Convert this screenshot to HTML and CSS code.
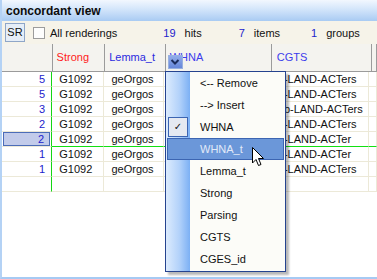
FILE: index.html
```html
<!DOCTYPE html>
<html lang="en">
<head>
  <meta charset="UTF-8">
  <title>concordant view</title>
  <link rel="stylesheet" href="styles.css">
</head>
<body>
  <div class="frame">
    <div class="titlebar">concordant view</div>

    <div class="toolbar">
      <div class="sr-btn">SR</div>
      <div class="check"></div>
      <span class="label first">All renderings</span>
      <span class="count n1">19</span><span class="label">hits</span>
      <span class="count n2">7</span><span class="label">items</span>
      <span class="count n3">1</span><span class="label">groups</span>
    </div>

    <div class="grid">
      <div class="row head">
        <div class="cell c0"></div>
        <div class="cell c1 red">Strong</div>
        <div class="cell c2">Lemma_t</div>
        <div class="cell c3 violet">WHNA
          <span class="drop-btn">
            <svg width="10" height="8" viewBox="0 0 10 8"><path d="M1.5 2 L5 5.5 L8.5 2" fill="none" stroke="#1c2c5c" stroke-width="2"/></svg>
          </span>
        </div>
        <div class="cell c4 violet">CGTS</div>
        <div class="cell c5"></div>
      </div>

      <div class="row"><div class="cell c0 num">5</div><div class="cell c1">G1092</div><div class="cell c2">geOrgos</div><div class="cell c3"></div><div class="cell c4">to-LAND-ACTers</div><div class="cell c5"></div></div>
      <div class="row"><div class="cell c0 num">5</div><div class="cell c1">G1092</div><div class="cell c2">geOrgos</div><div class="cell c3"></div><div class="cell c4">to-LAND-ACTers</div><div class="cell c5"></div></div>
      <div class="row"><div class="cell c0 num">3</div><div class="cell c1">G1092</div><div class="cell c2">geOrgos</div><div class="cell c3"></div><div class="cell c4">tob-LAND-ACTers</div><div class="cell c5"></div></div>
      <div class="row"><div class="cell c0 num">2</div><div class="cell c1">G1092</div><div class="cell c2">geOrgos</div><div class="cell c3"></div><div class="cell c4">to-LAND-ACTers</div><div class="cell c5"></div></div>
      <div class="row group-end"><div class="cell c0 num"><span class="sel">2</span></div><div class="cell c1">G1092</div><div class="cell c2">geOrgos</div><div class="cell c3"></div><div class="cell c4">to-LAND-ACTer</div><div class="cell c5"></div></div>
      <div class="row"><div class="cell c0 num">1</div><div class="cell c1">G1092</div><div class="cell c2">geOrgos</div><div class="cell c3"></div><div class="cell c4">to-LAND-ACTer</div><div class="cell c5"></div></div>
      <div class="row"><div class="cell c0 num">1</div><div class="cell c1">G1092</div><div class="cell c2">geOrgos</div><div class="cell c3"></div><div class="cell c4">to-LAND-ACTers</div><div class="cell c5"></div></div>
      <div class="row empty"><div class="cell c0"></div><div class="cell c1"></div><div class="cell c2"></div><div class="cell c3"></div><div class="cell c4"></div><div class="cell c5"></div></div>
    </div>

    <div class="menu">
      <div class="item">&lt;-- Remove</div>
      <div class="item">--&gt; Insert</div>
      <div class="item checked"><span class="tick">&#10003;</span>WHNA</div>
      <div class="item hot">WHNA_t</div>
      <div class="item">Lemma_t</div>
      <div class="item">Strong</div>
      <div class="item">Parsing</div>
      <div class="item">CGTS</div>
      <div class="item">CGES_id</div>
    </div>

    <svg class="cursor" width="13" height="20" viewBox="0 0 13 20">
      <path d="M0.5 0.5 L0.5 16 L4 12.5 L6.5 18.5 L9 17.5 L6.5 11.5 L11.5 11.5 Z" fill="#fff" stroke="#000" stroke-width="1"/>
    </svg>
  </div>
</body>
</html>
```

FILE: styles.css
```css
html, body {
  margin: 0;
  padding: 0;
}

body {
  font-family: "Liberation Sans", Arial, sans-serif;
  font-size: 11px;
  width: 377px;
  height: 279px;
  overflow: hidden;
  background: #fff;
}

.frame {
  position: relative;
  height: 277px;
  border-left: 2px solid #b4d2f5;
  border-bottom: 2px solid #a6caf3;
  overflow: hidden;
}

.titlebar {
  height: 21px;
  line-height: 22px;
  padding-left: 4px;
  font-weight: bold;
  font-size: 12px;
  color: #0c0c0c;
  background: linear-gradient(#f2f7fe, #d6e7fb 40%, #a9cbf3);
}

.toolbar {
  height: 23px;
  display: flex;
  align-items: center;
  background: #f6f3e9;
  white-space: nowrap;
}

.toolbar > * {
  flex-shrink: 0;
}

.sr-btn {
  width: 18px;
  height: 17px;
  margin-left: 3px;
  border: 1px solid #8fa6c8;
  background: #e6eef8;
  text-align: center;
  line-height: 17px;
  color: #111;
}

.check {
  width: 10px;
  height: 10px;
  margin-left: 8px;
  border: 1px solid #9c9c9c;
  background: #fdfdfd;
}

.label {
  margin-left: 9px;
  color: #111;
}

.label.first {
  margin-left: 5px;
}

.count {
  color: #2222cc;
}

.count.n1 { margin-left: 46px; }
.count.n2 { margin-left: 37px; }
.count.n3 { margin-left: 31px; }

.row {
  display: flex;
  height: 15px;
}

.cell {
  box-sizing: border-box;
  height: 15px;
  line-height: 15px;
  padding-left: 7px;
  border-right: 1px solid #ece9d8;
  border-bottom: 1px solid #ece9d8;
  white-space: nowrap;
  overflow: hidden;
  color: #111;
  position: relative;
}

.c0 { width: 51px; border-right-color: #14d614; }
.c1 { width: 53px; }
.c2 { width: 61px; }
.c3 { width: 107px; }
.c4 { width: 101px; padding-left: 5px; }
.c5 { flex: 1; }

.num {
  text-align: right;
  padding: 0 6px 0 0;
  color: #2222cc;
}

.row.head,
.row.head .cell {
  height: 28px;
  line-height: 26px;
}

.row.head .cell {
  background: #f4f3ef;
  border-right-color: #9b9b9b;
  border-bottom-color: #9b9b9b;
  padding-left: 4px;
  color: #2a2ae0;
}

.row.head .c4 {
  padding-left: 5px;
}

.row.head .red { color: #ff1a1a; }
.row.head .violet { color: #3c3cec; }

.drop-btn {
  position: absolute;
  left: 2px;
  top: 11px;
  width: 15px;
  height: 14px;
  background: linear-gradient(#90acea, #6686d8);
  border: 1px solid #98b0e0;
  box-sizing: border-box;
  display: flex;
  align-items: center;
  justify-content: center;
}

.row.group-end .cell:not(.c0) {
  border-bottom-color: #12e012;
}

.sel {
  display: block;
  margin-left: 1px;
  margin-right: -5px;
  padding-right: 5px;
  height: 14px;
  line-height: 13px;
  box-sizing: border-box;
  background: #c2cbea;
  border: 1px solid #4b6cb8;
}

.menu {
  position: absolute;
  left: 163px;
  top: 71px;
  width: 119px;
  height: 199px;
  border: 1px solid #25438f;
  background: #fcfcf8;
  box-shadow: 3px 3px 2px rgba(0, 0, 0, 0.28);
}

.menu::before {
  content: "";
  position: absolute;
  left: 0;
  top: 0;
  bottom: 0;
  width: 24px;
  background: linear-gradient(90deg, #dcebfd, #b3d2fa 55%, #7cb0f4);
}

.item {
  position: relative;
  height: 22px;
  line-height: 22px;
  padding-left: 34px;
  color: #111;
}

.item.hot {
  margin: 0 1px;
  padding-left: 32px;
  line-height: 20px;
  box-sizing: border-box;
  background: #6b97d9;
  border: 1px solid #3c65b2;
  color: #e2eaf8;
}

.tick {
  position: absolute;
  left: 2px;
  top: 1px;
  width: 20px;
  height: 20px;
  box-sizing: border-box;
  border: 1px solid #3c65b2;
  background: #e5e9f1;
  text-align: center;
  line-height: 18px;
  font-family: "DejaVu Sans", sans-serif;
  font-size: 10px;
  color: #111;
}

.cursor {
  position: absolute;
  left: 250px;
  top: 147px;
}
```
